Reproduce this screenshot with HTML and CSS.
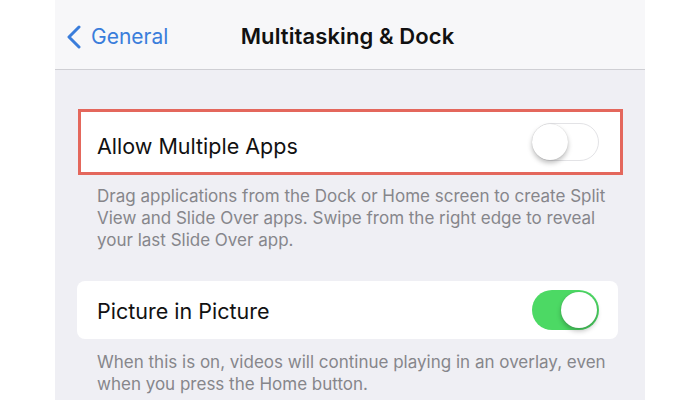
FILE: index.html
```html
<!DOCTYPE html>
<html>
<head>
<meta charset="utf-8">
<link rel="stylesheet" href="styles.css">
</head>
<body>
<div class="screen">
  <header class="nav">
    <div class="back">
      <svg class="chev" width="16" height="24" viewBox="0 0 16 24"><path d="M13 2 L3 12 L13 22" fill="none" stroke="#3a7ddb" stroke-width="3" stroke-linecap="round" stroke-linejoin="round"/></svg>
      <span class="back-label">General</span>
    </div>
    <div class="title">Multitasking &amp; Dock</div>
  </header>
  <main class="content">
    <div class="cell highlighted">
      <span class="label">Allow Multiple Apps</span>
      <span class="toggle off"><span class="knob"></span></span>
    </div>
    <p class="footer first">Drag applications from the Dock or Home screen to create Split<br>View and Slide Over apps. Swipe from the right edge to reveal<br>your last Slide Over app.</p>
    <div class="cell">
      <span class="label">Picture in Picture</span>
      <span class="toggle on"><span class="knob"></span></span>
    </div>
    <p class="footer">When this is on, videos will continue playing in an overlay, even<br>when you press the Home button.</p>
  </main>
</div>
</body>
</html>
```
FILE: styles.css
```css
html, body {
  margin: 0;
  padding: 0;
  background: #ffffff;
}
body {
  font-family: Inter, "Noto Sans", sans-serif;
  width: 700px;
  height: 400px;
  overflow: hidden;
}
.screen {
  margin-left: 55px;
  width: 590px;
  height: 400px;
  background: #efeff4;
  overflow: hidden;
}
.nav {
  height: 69px;
  background: #f7f7f9;
  border-bottom: 1px solid #cfcfd4;
  position: relative;
  display: flex;
  align-items: center;
  justify-content: center;
}
.back {
  position: absolute;
  left: 11px;
  top: 25px;
  display: flex;
  align-items: center;
  gap: 9px;
  color: #3a7ddb;
}
.back-label {
  font-size: 21px;
  letter-spacing: 0;
  margin-top: -2px;
}
.title {
  font-size: 22px;
  font-weight: 600;
  color: #111;
  margin-top: 2px;
  margin-left: -5px;
  letter-spacing: 0.1px;
}
.content {
  padding: 41px 27px 0 22px;
}
.cell {
  height: 58px;
  background: #fff;
  border-radius: 8px;
  display: flex;
  align-items: center;
  justify-content: space-between;
  padding: 0 19px 0 20px;
}
.cell.highlighted {
  height: 62px;
  border-radius: 0;
  outline: 3px solid #e4675c;
  outline-offset: -1px;
  margin-left: 3px;
  margin-right: -3px;
  padding-left: 17px;
  padding-right: 22px;
}
.label {
  font-size: 21.5px;
  color: #111;
  letter-spacing: 0;
  margin-top: 1px;
}
.cell.highlighted .label {
  margin-top: 8px;
}
.toggle {
  width: 67px;
  height: 38px;
  border-radius: 19px;
  position: relative;
  box-sizing: border-box;
}
.toggle.off {
  background: #fff;
  border: 1.5px solid #e3e3e6;
}
.toggle.on {
  background: #4cd964;
  height: 40px;
  border-radius: 20px;
}
.knob {
  position: absolute;
  width: 36px;
  height: 36px;
  border-radius: 50%;
  background: #fff;
  box-shadow: 0 3px 5px rgba(0,0,0,0.25), 0 0 1px rgba(0,0,0,0.2);
}
.toggle.off .knob {
  left: -1px;
  top: -0.5px;
}
.toggle.on .knob {
  right: 2px;
  top: 2px;
}
.footer {
  margin: 0;
  padding: 12px 0 33px 20px;
  font-size: 17px;
  line-height: 22px;
  color: #86868b;
}
.footer.first {
  padding-bottom: 30px;
}
```
